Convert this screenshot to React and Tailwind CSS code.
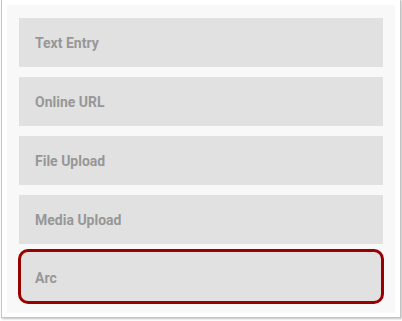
const options = ["Text Entry", "Online URL", "File Upload", "Media Upload"];

export default function App() {
  return (
    <div className="h-[321px] w-[402px] bg-white font-['Roboto',sans-serif]">
      {/* window frame */}
      <div className="ml-[1px] h-[318px] w-[400px] border-x border-b border-[#c4c4c4] bg-white px-[5px] pt-[5px] shadow-[1px_1px_2px_rgba(0,0,0,0.25)]">
        <div className="flex h-[308px] flex-col gap-[10px] bg-[#f8f8f8] px-[12px] pt-[13px]">
          {options.map((label) => (
            <button
              key={label}
              className="flex h-[49px] shrink-0 items-center bg-[#e1e1e1] px-[16px] pt-[2px] text-left text-[14px] font-bold text-[#979797]"
            >
              {label}
            </button>
          ))}

          {/* selected */}
          <button className="-mx-[1px] -mt-[5px] flex h-[55px] shrink-0 items-center rounded-[10px] border-[3px] border-[#990000] bg-[#e1e1e1] px-[14px] pt-[3px] text-left text-[14px] font-bold text-[#979797]">
            Arc
          </button>
        </div>
      </div>
    </div>
  );
}
